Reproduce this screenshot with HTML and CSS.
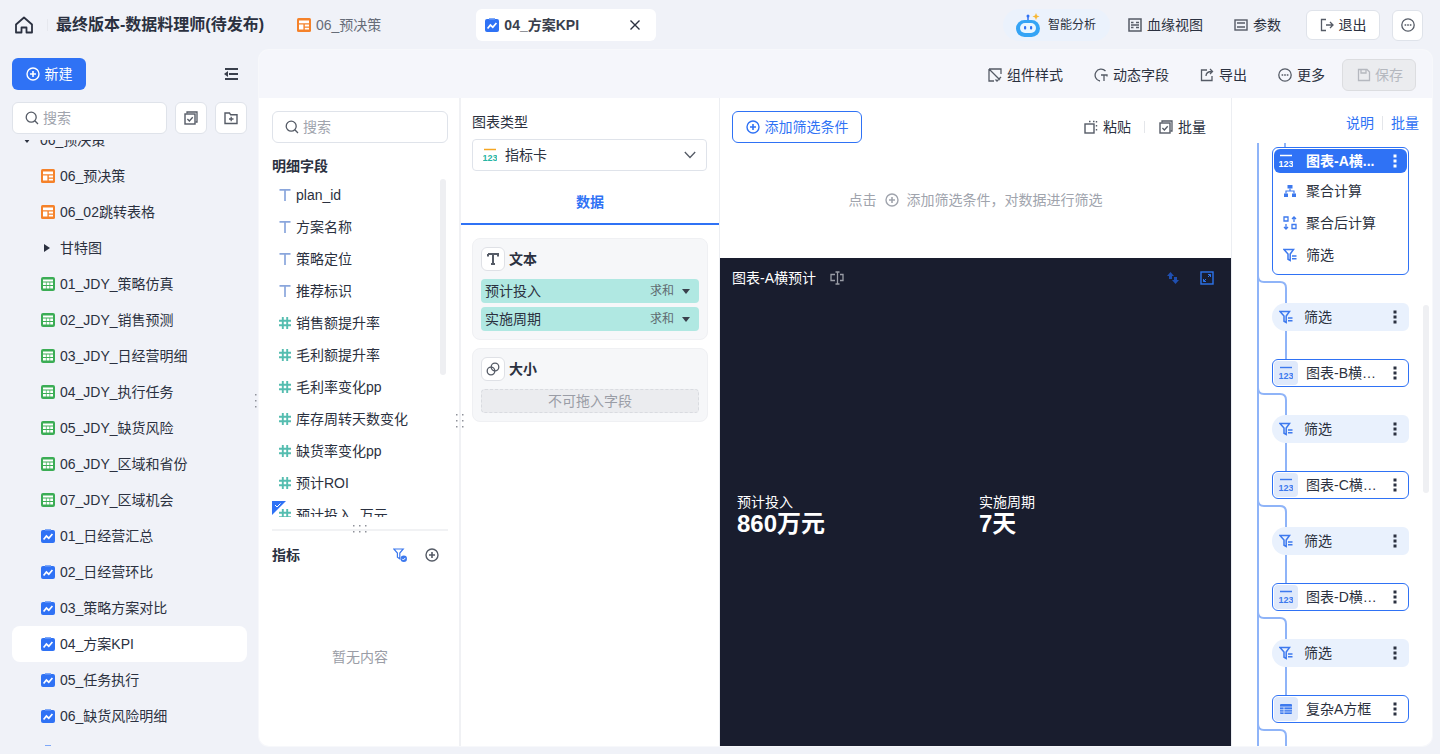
FILE: index.html
```html
<!DOCTYPE html>
<html lang="zh-CN">
<head>
  <meta charset="UTF-8">
  <title>最终版本-数据料理师(待发布)</title>
  <link rel="stylesheet" href="styles.css">
</head>
<body>
<svg class="defs" width="0" height="0">
  <symbol id="i-dash" viewBox="0 0 14 14"><rect width="14" height="14" rx="1.500" fill="#f5822a"/><path d="M2 2.400h10v2.800H2zM2 6.600h4.400v5H2zM7.800 6.600H12v2H7.800zM7.800 9.800H12v1.800H7.800z" fill="#fff"/></symbol>
  <symbol id="i-table" viewBox="0 0 14 14"><rect width="14" height="14" rx="2" fill="#3bad55"/><path d="M2 2.400h10v2H2zM2 5.600h2.900v2.400H2zM5.600 5.600h2.900v2.400H5.600zM9.200 5.600H12v2.400H9.200zM2 9h2.900v2.600H2zM5.600 9h2.900v2.600H5.600zM9.200 9H12v2.600H9.200z" fill="#fff"/></symbol>
  <symbol id="i-chart" viewBox="0 0 14 14"><rect y="1" width="14" height="13" rx="2" fill="#2f72f5"/><path d="M4 0h6v1.500H4z" fill="#7ea8f8"/><path d="M2.600 10.500l2.800-3.500 2.400 2.200 3.600-4.200" fill="none" stroke="#fff" stroke-width="1.700"/></symbol>
  <symbol id="i-t" viewBox="0 0 14 14"><path d="M1.500 1.800h11M7 1.800V13" fill="none" stroke="#8aa6dc" stroke-width="1.700"/></symbol>
  <symbol id="i-hash" viewBox="0 0 14 14"><path d="M4.800 1v12M9.200 1v12M1 4.800h12M1 9.200h12" fill="none" stroke="#55bdb0" stroke-width="1.900"/></symbol>
  <symbol id="i-search" viewBox="0 0 14 14"><circle cx="6.200" cy="6.200" r="5" fill="none" stroke="#555b66" stroke-width="1.300"/><path d="M9.800 9.800l3.200 3.200" stroke="#555b66" stroke-width="1.300"/></symbol>
  <symbol id="i-plus" viewBox="0 0 14 14"><circle cx="7" cy="7" r="6" fill="none" stroke="currentColor" stroke-width="1.400"/><path d="M4 7h6M7 4v6" stroke="currentColor" stroke-width="1.600"/></symbol>
  <symbol id="i-more" viewBox="0 0 14 14"><circle cx="7" cy="7" r="6.200" fill="none" stroke="#555b66" stroke-width="1.300"/><path d="M3.600 6.200h1.600v1.600H3.600zM6.200 6.200h1.600v1.600H6.200zM8.800 6.200h1.600v1.600H8.800z" fill="#555b66"/></symbol>
  <symbol id="i-batch" viewBox="0 0 14 14"><path d="M3 2.500V1h10v10h-1.500" fill="none" stroke="#555b66" stroke-width="1.300"/><rect x="1" y="3" width="10" height="10" fill="none" stroke="#555b66" stroke-width="1.400"/><path d="M3.400 8l2 2 3.300-3.800" fill="none" stroke="#555b66" stroke-width="1.300"/></symbol>
  <symbol id="i-funnel" viewBox="0 0 14 14"><path d="M1 1.500h9.500L7.200 6v6.500L5 11.200V6z" fill="none" stroke="#3d79ee" stroke-width="1.500"/><path d="M9 8h4.500M9 10.800h4.500" stroke="#3d79ee" stroke-width="1.400"/></symbol>
  <symbol id="i-num" viewBox="0 0 14 14"><path d="M1 1.500h12" stroke="currentColor" stroke-width="1.400"/><text x="7" y="12.500" font-size="9" font-weight="700" text-anchor="middle" fill="currentColor" font-family="Liberation Sans">123</text></symbol>
  <symbol id="i-dots" viewBox="0 0 4 14"><path d="M.5 .5h3v3h-3zM.5 5.500h3v3h-3zM.5 10.500h3v3h-3z" fill="currentColor"/></symbol>
  <symbol id="i-link" viewBox="0 0 32 28"><path d="M2 0v1q0 6 6 6h16q6 0 6 6v15" fill="none" stroke="#8fb4f8" stroke-width="2"/></symbol>
  <symbol id="i-grip" viewBox="0 0 8 14"><path d="M0 0h1.500v1.500H0zM0 6h1.500v1.500H0zM0 12h1.500v1.500H0zM6 0h1.500v1.500H6zM6 6h1.500v1.500H6zM6 12h1.500v1.500H6z" fill="#8f929a"/></symbol>
  <symbol id="i-grip-s" viewBox="0 0 2 14"><path d="M0 0h1.500v1.500H0zM0 6h1.500v1.500H0zM0 12h1.500v1.500H0z" fill="#8f929a"/></symbol>
  <symbol id="i-grip-h" viewBox="0 0 14 8"><path d="M0 0h1.500v1.500H0zM6 0h1.500v1.500H6zM12 0h1.500v1.500H12zM0 6h1.500v1.500H0zM6 6h1.500v1.500H6zM12 6h1.500v1.500H12z" fill="#8f929a"/></symbol>
</svg>

<header class="topbar">
  <svg class="home" width="20" height="20" viewBox="0 0 20 20"><path d="M2 9.500L10 2.500l8 7V17.500h-5.500v-5h-5v5H2z" fill="none" stroke="#2b3140" stroke-width="1.800" stroke-linejoin="round"/></svg>
  <span class="top-sep"></span>
  <h1 class="title">最终版本-数据料理师(待发布)</h1>
  <div class="tab"><svg class="ico14"><use href="#i-dash"/></svg>06_预决策</div>
  <div class="tab tab-on"><svg class="ico14"><use href="#i-chart"/></svg><b>04_方案KPI</b><svg class="tab-x" width="10" height="10" viewBox="0 0 10 10"><path d="M.5 .5l9 9M9.500 .5l-9 9" stroke="#2b3140" stroke-width="1.400"/></svg></div>
  <div class="top-right">
    <div class="ai-pill">
      <svg width="26" height="26" viewBox="0 0 26 26"><path d="M21 1l1 2.500 2.500 1-2.500 1-1 2.500-1-2.500-2.500-1 2.500-1z" fill="#f7b733"/><circle cx="13" cy="4" r="1.500" fill="#2f72f5"/><path d="M13 4v4" stroke="#2f72f5" stroke-width="1.500"/><rect x="1" y="8" width="24" height="17" rx="8.500" fill="#35a4f5"/><rect x="5" y="11" width="16" height="10" rx="5" fill="#eaf6ff"/><rect x="9" y="14" width="2.200" height="3.500" rx="1" fill="#2f72f5"/><rect x="15" y="14" width="2.200" height="3.500" rx="1" fill="#2f72f5"/></svg>
      <span>智能分析</span>
    </div>
    <div class="top-link"><svg class="ico14" viewBox="0 0 14 14"><rect x="1" y="1" width="12" height="12" fill="none" stroke="#555b66" stroke-width="1.500"/><path d="M3 4.500h2.500M3 9.500h2.500M8 4.500h3M8 9.500h3M3 7h8" stroke="#555b66" stroke-width="1.300"/></svg>血缘视图</div>
    <div class="top-link link-param"><svg class="ico14" viewBox="0 0 14 14"><rect x="1" y="2" width="12" height="10" fill="none" stroke="#555b66" stroke-width="1.400"/><path d="M3 5h8M3 9h8" stroke="#555b66" stroke-width="1.300"/></svg>参数</div>
    <button class="btn-exit"><svg class="ico14" viewBox="0 0 14 14"><path d="M6 1.500H1.500v11H6M6 7h7M10 4l3 3-3 3" fill="none" stroke="#555b66" stroke-width="1.300"/></svg>退出</button>
    <button class="btn-more"><svg class="ico14"><use href="#i-more"/></svg></button>
  </div>
</header>

<div class="page">
  <aside class="side">
    <div class="side-top">
      <button class="btn-new"><svg class="ico14"><use href="#i-plus"/></svg>新建</button>
      <svg class="collapse" width="14" height="14" viewBox="0 0 14 14"><path d="M1 2h13M5 7h9M1 12h13" stroke="#3a404c" stroke-width="1.800"/><path d="M0 7l4-3v6z" fill="#3a404c"/></svg>
    </div>
    <div class="side-search">
      <div class="search"><svg class="ico14"><use href="#i-search"/></svg>搜索</div>
      <div class="square"><svg class="ico14"><use href="#i-batch"/></svg></div>
      <div class="square"><svg class="ico14" viewBox="0 0 14 14"><path d="M1 2h4.500l1.200 1.800H13v8.700H1z" fill="none" stroke="#555b66" stroke-width="1.400"/><path d="M5 8h4.500M7.200 5.800v4.400" stroke="#555b66" stroke-width="1.300"/></svg></div>
    </div>
    <ul class="tree-list">
      <li class="row row-group"><span class="dot"></span>06_预决策</li>
      <li class="row"><svg class="ico14"><use href="#i-dash"/></svg>06_预决策</li>
      <li class="row"><svg class="ico14"><use href="#i-dash"/></svg>06_02跳转表格</li>
      <li class="row row-folder"><span class="caret"></span>甘特图</li>
      <li class="row"><svg class="ico14"><use href="#i-table"/></svg>01_JDY_策略仿真</li>
      <li class="row"><svg class="ico14"><use href="#i-table"/></svg>02_JDY_销售预测</li>
      <li class="row"><svg class="ico14"><use href="#i-table"/></svg>03_JDY_日经营明细</li>
      <li class="row"><svg class="ico14"><use href="#i-table"/></svg>04_JDY_执行任务</li>
      <li class="row"><svg class="ico14"><use href="#i-table"/></svg>05_JDY_缺货风险</li>
      <li class="row"><svg class="ico14"><use href="#i-table"/></svg>06_JDY_区域和省份</li>
      <li class="row"><svg class="ico14"><use href="#i-table"/></svg>07_JDY_区域机会</li>
      <li class="row"><svg class="ico14"><use href="#i-chart"/></svg>01_日经营汇总</li>
      <li class="row"><svg class="ico14"><use href="#i-chart"/></svg>02_日经营环比</li>
      <li class="row"><svg class="ico14"><use href="#i-chart"/></svg>03_策略方案对比</li>
      <li class="row row-on"><svg class="ico14"><use href="#i-chart"/></svg>04_方案KPI</li>
      <li class="row"><svg class="ico14"><use href="#i-chart"/></svg>05_任务执行</li>
      <li class="row"><svg class="ico14"><use href="#i-chart"/></svg>06_缺货风险明细</li>
      <li class="row"><svg class="ico14"><use href="#i-chart"/></svg></li>
    </ul>
    <svg class="grip grip-side"><use href="#i-grip-s"/></svg>
  </aside>

  <main class="main">
    <div class="toolbar">
      <div class="tool"><svg class="ico14" viewBox="0 0 14 14"><path d="M1 1h12v5M1 1v12h5M1 1l11 11M13 9l-4 4-1.500-1.500" fill="none" stroke="#555b66" stroke-width="1.300"/></svg>组件样式</div>
      <div class="tool"><svg class="ico14" viewBox="0 0 14 14"><path d="M11.500 3A6 6 0 1 0 6 13M7 7h6v1.500M10 7v6" fill="none" stroke="#555b66" stroke-width="1.300"/></svg>动态字段</div>
      <div class="tool"><svg class="ico14" viewBox="0 0 14 14"><path d="M7 2H1.500v10.500H12V8M6 8c0-3 2-4.500 6-4.500M10 1l2.500 2.500L10 6" fill="none" stroke="#555b66" stroke-width="1.300"/></svg>导出</div>
      <div class="tool"><svg class="ico14"><use href="#i-more"/></svg>更多</div>
      <button class="btn-save"><svg class="ico14" viewBox="0 0 14 14"><path d="M1.500 1.500h8.500l2.500 2.500v8.500h-11zM4 1.500v3.500h5V1.500" fill="none" stroke="#b5b8bf" stroke-width="1.300"/></svg>保存</button>
    </div>

    <div class="work">
      <section class="fields">
        <div class="search search-f"><svg class="ico14"><use href="#i-search"/></svg>搜索</div>
        <h3 class="sub">明细字段</h3>
        <div class="field-box">
          <ul class="field-list">
            <li><svg class="ico14"><use href="#i-t"/></svg>plan_id</li>
            <li><svg class="ico14"><use href="#i-t"/></svg>方案名称</li>
            <li><svg class="ico14"><use href="#i-t"/></svg>策略定位</li>
            <li><svg class="ico14"><use href="#i-t"/></svg>推荐标识</li>
            <li><svg class="ico14"><use href="#i-hash"/></svg>销售额提升率</li>
            <li><svg class="ico14"><use href="#i-hash"/></svg>毛利额提升率</li>
            <li><svg class="ico14"><use href="#i-hash"/></svg>毛利率变化pp</li>
            <li><svg class="ico14"><use href="#i-hash"/></svg>库存周转天数变化</li>
            <li><svg class="ico14"><use href="#i-hash"/></svg>缺货率变化pp</li>
            <li><svg class="ico14"><use href="#i-hash"/></svg>预计ROI</li>
            <li class="field-checked"><svg class="ico14"><use href="#i-hash"/></svg>预计投入_万元</li>
          </ul>
          <span class="f-scroll"></span>
          <svg class="corner" width="14" height="14" viewBox="0 0 14 14"><path d="M0 0h14L0 14z" fill="#2f72f5"/><path d="M3 4l2 2 3.500-3.500" fill="none" stroke="#fff" stroke-width="1"/></svg>
        </div>
        <div class="split"><svg class="grip-h"><use href="#i-grip-h"/></svg></div>
        <div class="metric-head">
          <h3 class="sub">指标</h3>
          <svg class="ico14" viewBox="0 0 14 14"><path d="M.8 1h9.400L6.800 5v5.800L4.400 9.200V5z" fill="none" stroke="#3d79ee" stroke-width="1.200"/><circle cx="10.800" cy="10.800" r="3.200" fill="#3d79ee"/><path d="M9.200 10.800l1.200 1.200 1.900-2.100" fill="none" stroke="#fff" stroke-width="1"/></svg>
          <svg class="ico14 metric-add"><use href="#i-plus"/></svg>
        </div>
        <div class="empty">暂无内容</div>
        <svg class="grip grip-f"><use href="#i-grip"/></svg>
      </section>

      <section class="config">
        <div class="cfg-type">
          <label>图表类型</label>
          <div class="select">
            <svg class="ico14" viewBox="0 0 14 14"><path d="M1 1.500h12" stroke="#f5a623" stroke-width="1.400"/><text x="7" y="12.500" font-size="9" font-weight="700" text-anchor="middle" fill="#27b5a4" font-family="Liberation Sans">123</text></svg>
            <span>指标卡</span>
            <svg class="chev" width="12" height="8" viewBox="0 0 12 8"><path d="M.8 1l5.200 5.500L11.200 1" fill="none" stroke="#555b66" stroke-width="1.300"/></svg>
          </div>
        </div>
        <div class="cfg-tab">数据</div>
        <div class="slots">
          <div class="slot">
            <div class="slot-head">
              <span class="slot-ico"><svg class="ico14" viewBox="0 0 14 14"><path d="M2 2h10v2.400M2 2v2.400M7 2v10M5 12h4" fill="none" stroke="#555b66" stroke-width="2"/></svg></span>文本
            </div>
            <div class="chip"><span>预计投入</span><em>求和</em><i></i></div>
            <div class="chip"><span>实施周期</span><em>求和</em><i></i></div>
          </div>
          <div class="slot">
            <div class="slot-head">
              <span class="slot-ico"><svg class="ico14" viewBox="0 0 14 14"><circle cx="5" cy="9" r="3.800" fill="none" stroke="#555b66" stroke-width="1.300"/><circle cx="9" cy="5" r="3.800" fill="none" stroke="#555b66" stroke-width="1.300"/></svg></span>大小
            </div>
            <div class="nodrop">不可拖入字段</div>
          </div>
        </div>
      </section>

      <section class="canvas">
        <div class="filter-area">
          <div class="filter-head">
            <button class="btn-filter"><svg class="ico14"><use href="#i-plus"/></svg>添加筛选条件</button>
            <div class="filter-acts">
              <span><svg class="ico14" viewBox="0 0 14 14"><rect x="1" y="4" width="9" height="9" fill="none" stroke="#555b66" stroke-width="1.400"/><path d="M5 1.500h1.500M9 1.500h1.500M12.500 1v1.500M12.500 5v1.500M12.500 9v1.500" stroke="#555b66" stroke-width="1.400"/></svg>粘贴</span>
              <i class="v-sep"></i>
              <span><svg class="ico14"><use href="#i-batch"/></svg>批量</span>
            </div>
          </div>
          <div class="filter-tip">点击<svg class="ico14"><use href="#i-plus"/></svg>添加筛选条件，对数据进行筛选</div>
        </div>
        <div class="chart">
          <div class="chart-head">
            <span>图表-A横预计</span>
            <svg class="ico14 chart-edit" viewBox="0 0 14 14"><path d="M5 3.500H1v6h4M10 3.500h3v6h-3M7.500 1v12M5.500 1h4M5.500 13h4" fill="none" stroke="#9a9da6" stroke-width="1.300"/></svg>
            <div class="chart-acts">
              <svg class="ico14" viewBox="0 0 14 14"><path d="M4.500 1L8 5H6v3H3V5H1zM9.500 13L6 9h2V6h3v3h2z" fill="#1f4fb0"/></svg>
              <svg class="ico14" viewBox="0 0 14 14"><rect x="1" y="1" width="12" height="12" fill="none" stroke="#2d74ec" stroke-width="1.400"/><path d="M8 6l2.500-2.500M8 3.500h2.500V6M6 8L3.500 10.500M3.500 8v2.500H6" fill="none" stroke="#2d74ec" stroke-width="1"/></svg>
            </div>
          </div>
          <div class="kpis">
            <div class="kpi"><span>预计投入</span><strong>860万元</strong></div>
            <div class="kpi"><span>实施周期</span><strong>7天</strong></div>
          </div>
        </div>
      </section>

      <section class="steps">
        <div class="steps-head"><a>说明</a><i></i><a>批量</a></div>
        <div class="flow">
          <div class="group">
            <div class="group-title"><svg class="ico14"><use href="#i-num"/></svg><b>图表-A横...</b><svg class="dots"><use href="#i-dots"/></svg></div>
            <div class="group-row"><svg class="ico14" viewBox="0 0 14 14"><path d="M4.500 1h5v3.500h-5zM1 9.500h4V13H1zM9 9.500h4V13H9z" fill="#3d79ee"/><path d="M7 4.500V7M3 9.500V7h8v2.500" fill="none" stroke="#3d79ee" stroke-width="1.200"/></svg>聚合计算</div>
            <div class="group-row"><svg class="ico14" viewBox="0 0 14 14"><path d="M1 1h4v4H1zM9 8.500h4v4H9z" fill="none" stroke="#3d79ee" stroke-width="1.300"/><path d="M3 8v5M1 11l2 2 2-2M11 6V1M9 3l2-2 2 2" fill="none" stroke="#3d79ee" stroke-width="1.300"/></svg>聚合后计算</div>
            <div class="group-row"><svg class="ico14"><use href="#i-funnel"/></svg>筛选</div>
          </div>
          <svg class="link"><use href="#i-link"/></svg>
          <div class="pill"><svg class="ico14"><use href="#i-funnel"/></svg><span>筛选</span><svg class="dots"><use href="#i-dots"/></svg></div>
          <div class="stem"></div>
          <div class="node"><span class="node-ico"><svg class="ico14"><use href="#i-num"/></svg></span><span class="node-name">图表-B横预计</span><svg class="dots"><use href="#i-dots"/></svg></div>
          <svg class="link"><use href="#i-link"/></svg>
          <div class="pill"><svg class="ico14"><use href="#i-funnel"/></svg><span>筛选</span><svg class="dots"><use href="#i-dots"/></svg></div>
          <div class="stem"></div>
          <div class="node"><span class="node-ico"><svg class="ico14"><use href="#i-num"/></svg></span><span class="node-name">图表-C横预计</span><svg class="dots"><use href="#i-dots"/></svg></div>
          <svg class="link"><use href="#i-link"/></svg>
          <div class="pill"><svg class="ico14"><use href="#i-funnel"/></svg><span>筛选</span><svg class="dots"><use href="#i-dots"/></svg></div>
          <div class="stem"></div>
          <div class="node"><span class="node-ico"><svg class="ico14"><use href="#i-num"/></svg></span><span class="node-name">图表-D横预计</span><svg class="dots"><use href="#i-dots"/></svg></div>
          <svg class="link"><use href="#i-link"/></svg>
          <div class="pill"><svg class="ico14"><use href="#i-funnel"/></svg><span>筛选</span><svg class="dots"><use href="#i-dots"/></svg></div>
          <div class="stem"></div>
          <div class="node"><span class="node-ico"><svg class="ico14" viewBox="0 0 14 14"><rect x="1" y="2" width="12" height="10" rx="1" fill="#3d79ee"/><path d="M1 5h12M1 7.700h12M1 10h12M5 5v7" stroke="#dfe9fb" stroke-width=".8"/></svg></span><span class="node-name">复杂A方框</span><svg class="dots"><use href="#i-dots"/></svg></div>
          <svg class="link"><use href="#i-link"/></svg>
        </div>
        <span class="s-scroll"></span>
      </section>
    </div>
  </main>
</div>
</body>
</html>
```

FILE: styles.css
```css
* {
    box-sizing: border-box;
}
html, body {
    height: 100%;
}
body {
    margin: 0;
    overflow: hidden;
    background-color: #f0f2f8;
    color: #2b3140;
    font-family: "Liberation Sans", "Noto Sans CJK SC", sans-serif;
    font-size: 14px;
    line-height: 20px;
}
ul {
    list-style: none;
    margin: 0;
    padding: 0;
}
button {
    font: inherit;
    cursor: pointer;
}
.defs {
    position: absolute;
}
.ico14 {
    width: 14px;
    height: 14px;
    flex: none;
}

/* top bar */
.topbar {
    height: 50px;
    display: flex;
    align-items: center;
    padding-left: 14px;
}
.home {
    flex: none;
}
.top-sep {
    width: 1px;
    height: 12px;
    margin: 0 8px 0 13px;
    background-color: #e6e8ee;
}
.title {
    margin: 0;
    width: 241px;
    font-size: 16px;
    line-height: 22px;
    font-weight: 700;
    white-space: nowrap;
}
.tab {
    display: flex;
    align-items: center;
    gap: 5px;
    color: #666c78;
}
.tab-on {
    margin-left: 95px;
    width: 180px;
    height: 32px;
    padding: 0 16px 0 9px;
    background-color: #fff;
    border-radius: 6px;
    color: #3a404c;
}
.tab-x {
    margin-left: auto;
}
.top-right {
    margin-left: auto;
    display: flex;
    align-items: center;
    padding-right: 17px;
}
.ai-pill {
    width: 107px;
    height: 32px;
    display: flex;
    align-items: center;
    gap: 7px;
    padding-left: 12px;
    border-radius: 16px;
    background-color: #ebf2fc;
    font-size: 12px;
}
.top-link {
    display: flex;
    align-items: center;
    gap: 5px;
    margin-left: 18px;
}
.link-param {
    margin-left: 31px;
}
.btn-exit {
    display: flex;
    align-items: center;
    justify-content: center;
    gap: 5px;
    width: 74px;
    height: 30px;
    margin-left: 25px;
    background-color: #fff;
    border: 1px solid #dfe3ea;
    border-radius: 6px;
    color: #2b3140;
}
.btn-more {
    display: flex;
    align-items: center;
    justify-content: center;
    width: 31px;
    height: 31px;
    margin-left: 12px;
    padding: 0;
    background-color: #fff;
    border: 1px solid #dfe3ea;
    border-radius: 6px;
}

/* page */
.page {
    height: 696px;
    display: flex;
}
.side {
    position: relative;
    width: 259px;
    flex: none;
    padding-top: 8px;
}
.side-top {
    display: flex;
    align-items: center;
    justify-content: space-between;
    padding: 0 21px 0 12px;
}
.btn-new {
    display: flex;
    align-items: center;
    justify-content: center;
    gap: 5px;
    width: 74px;
    height: 32px;
    padding: 0;
    background-color: #2f72f5;
    border: 0;
    border-radius: 6px;
    color: #fff;
}
.side-search {
    display: flex;
    gap: 8px;
    margin: 12px 12px 0 12px;
}
.search {
    display: flex;
    align-items: center;
    gap: 4px;
    width: 155px;
    height: 32px;
    padding-left: 12px;
    background-color: #fff;
    border: 1px solid #dfe3ea;
    border-radius: 6px;
    color: #a0a4ad;
}
.square {
    display: flex;
    align-items: center;
    justify-content: center;
    width: 32px;
    height: 32px;
    background-color: #fff;
    border: 1px solid #dfe3ea;
    border-radius: 6px;
}
.tree-list {
    height: 606px;
    margin-top: 6px;
    padding: 0 12px;
    overflow: hidden;
}
.row {
    display: flex;
    align-items: center;
    gap: 5px;
    height: 36px;
    padding-left: 29px;
    border-radius: 8px;
}
.row-group {
    margin-top: -18px;
    padding-left: 11px;
    gap: 9px;
}
.row-group .dot {
    width: 0;
    height: 0;
    border-top: 5px solid #2b3140;
    border-left: 4px solid transparent;
    border-right: 4px solid transparent;
}
.row-folder {
    padding-left: 32px;
    gap: 10px;
}
.caret {
    width: 0;
    height: 0;
    border-left: 6px solid #2b3140;
    border-top: 4px solid transparent;
    border-bottom: 4px solid transparent;
}
.row-on {
    background-color: #fff;
}
.grip {
    position: absolute;
    width: 8px;
    height: 14px;
}
.grip-side {
    left: 255px;
    top: 344px;
    width: 2px;
}

/* main card */
.main {
    flex: 1;
    margin-right: 8px;
    display: flex;
    flex-direction: column;
    background-color: #f5f6fb;
    border-radius: 10px;
    overflow: hidden;
    box-shadow: 0 0 0 1px #f7f8fb;
}
.toolbar {
    height: 48px;
    flex: none;
    display: flex;
    align-items: center;
    justify-content: flex-end;
    gap: 31px;
    padding: 2px 16px 0 0;
}
.tool {
    display: flex;
    align-items: center;
    gap: 5px;
}
.btn-save {
    display: flex;
    align-items: center;
    justify-content: center;
    gap: 4px;
    width: 74px;
    height: 32px;
    margin-left: -14px;
    padding: 0 0 0 2px;
    background-color: #ebecef;
    border: 1px solid #dcdde0;
    border-radius: 6px;
    color: #b5b8bf;
}
.work {
    flex: 1;
    min-height: 0;
    display: flex;
    background-color: #fff;
}

/* field panel */
.fields {
    position: relative;
    width: 202px;
    flex: none;
    padding: 13px 11px 0 13px;
    border-right: 2px solid #f0f1f4;
}
.search-f {
    width: 176px;
}
.sub {
    margin: 0;
    font-size: 14px;
    line-height: 18px;
    font-weight: 700;
}
.fields > .sub {
    margin-top: 14px;
}
.field-box {
    position: relative;
    height: 338px;
    margin-top: 4px;
    overflow: hidden;
}
.field-list li {
    display: flex;
    align-items: center;
    gap: 4px;
    height: 32px;
    padding-left: 6px;
}
.f-scroll {
    position: absolute;
    right: 2px;
    top: 0;
    width: 6px;
    height: 196px;
    border-radius: 3px;
    background-color: #eeeff2;
}
.corner {
    position: absolute;
    left: 0;
    top: 322px;
}
.split {
    position: relative;
    height: 2px;
    margin-top: 12px;
    background-color: #f1f2f4;
}
.grip-h {
    position: absolute;
    left: 81px;
    top: -4px;
    width: 14px;
    height: 8px;
}
.metric-head {
    display: flex;
    align-items: center;
    gap: 18px;
    height: 18px;
    margin-top: 15px;
}
.metric-head .sub {
    flex: 1;
}
.metric-add {
    color: #555b66;
    margin-right: 9px;
}
.empty {
    margin-top: 83px;
    text-align: center;
    color: #9a9da6;
}
.grip-f {
    left: 197px;
    top: 316px;
}

/* config panel */
.config {
    width: 259px;
    flex: none;
    border-right: 1px solid #eceef2;
}
.cfg-type {
    padding: 15px 12px 0 11px;
}
.cfg-type label {
    display: block;
    line-height: 18px;
}
.select {
    display: flex;
    align-items: center;
    gap: 8px;
    height: 32px;
    margin-top: 8px;
    padding: 0 10px;
    border: 1px solid #dfe3ea;
    border-radius: 4px;
}
.chev {
    margin-left: auto;
}
.cfg-tab {
    height: 44px;
    margin-top: 10px;
    padding-top: 10px;
    border-bottom: 2px solid #2f72f5;
    text-align: center;
    color: #2f72f5;
    font-weight: 700;
    line-height: 22px;
}
.slots {
    padding: 13px 11px 0;
}
.slot {
    margin-bottom: 8px;
    padding: 8px;
    background-color: #f6f7f9;
    border: 1px solid #eff0f3;
    border-radius: 8px;
}
.slot-head {
    display: flex;
    align-items: center;
    gap: 4px;
    height: 24px;
    margin-bottom: 8px;
    font-weight: 700;
}
.slot-ico {
    display: flex;
    align-items: center;
    justify-content: center;
    width: 24px;
    height: 24px;
    background-color: #fff;
    border: 1px solid #dfe1e6;
    border-radius: 6px;
}
.chip {
    display: flex;
    align-items: center;
    height: 24px;
    margin-bottom: 4px;
    padding: 0 9px 0 4px;
    background-color: #b0e8e2;
    border-radius: 4px;
}
.chip:last-child {
    margin-bottom: 0;
}
.chip span {
    flex: 1;
}
.chip em {
    font-style: normal;
    font-size: 12px;
    color: #5f6a70;
    margin-right: 8px;
}
.chip i {
    width: 0;
    height: 0;
    border-top: 5px solid #3a404c;
    border-left: 4px solid transparent;
    border-right: 4px solid transparent;
}
.nodrop {
    height: 24px;
    background-color: #ebecef;
    border: 1px dashed #d9dbe0;
    border-radius: 4px;
    text-align: center;
    line-height: 22px;
    color: #9a9da6;
}

/* canvas */
.canvas {
    flex: 1;
    min-width: 0;
    display: flex;
    flex-direction: column;
    border-right: 1px solid #eceef2;
}
.filter-area {
    height: 160px;
    flex: none;
    padding: 13px 12px 0;
}
.filter-head {
    display: flex;
    align-items: center;
    justify-content: space-between;
}
.btn-filter {
    display: flex;
    align-items: center;
    justify-content: center;
    gap: 5px;
    width: 130px;
    height: 32px;
    padding: 0;
    background-color: #fff;
    border: 1px solid #2f72f5;
    border-radius: 6px;
    color: #2f72f5;
}
.filter-acts {
    display: flex;
    align-items: center;
    padding-right: 13px;
}
.filter-acts span {
    display: flex;
    align-items: center;
    gap: 5px;
}
.v-sep {
    width: 1px;
    height: 12px;
    margin: 0 14px 0 13px;
    background-color: #e4e6ea;
}
.filter-tip {
    display: flex;
    align-items: center;
    justify-content: center;
    gap: 8px;
    margin-top: 47px;
    color: #a0a4ad;
}
.chart {
    flex: 1;
    display: flex;
    flex-direction: column;
    background-color: #191d2e;
    color: #fff;
}
.chart-head {
    display: flex;
    align-items: center;
    height: 40px;
    flex: none;
    padding: 0 17px 0 12px;
}
.chart-edit {
    margin-left: 14px;
}
.chart-acts {
    margin-left: auto;
    display: flex;
    gap: 20px;
}
.kpis {
    flex: 1;
    display: grid;
    grid-template-columns: 242px 1fr;
    align-items: center;
    padding: 0 17px 13px;
}
.kpi span {
    display: block;
    line-height: 16px;
}
.kpi strong {
    display: block;
    font-size: 24px;
    line-height: 28px;
}

/* step flow */
.steps {
    position: relative;
    width: 200px;
    flex: none;
    display: flex;
    flex-direction: column;
}
.steps-head {
    height: 49px;
    flex: none;
    display: flex;
    align-items: center;
    justify-content: flex-end;
    gap: 8px;
    padding-right: 13px;
    color: #2f72f5;
}
.steps-head i {
    width: 1px;
    height: 14px;
    background-color: #e4e6ea;
}
.flow {
    position: relative;
    flex: 1;
    min-height: 0;
    margin-top: -4px;
    padding: 4px 23px 0 40px;
    overflow: hidden;
}
.flow::before {
    content: "";
    position: absolute;
    left: 25px;
    top: 0;
    bottom: 0;
    width: 2px;
    background-color: #8fb4f8;
}
.group {
    position: relative;
    height: 128px;
    padding: 1px;
    border: 1px solid #2f72f5;
    border-radius: 6px;
    background-color: #fff;
}
.group::before {
    content: "";
    position: absolute;
    left: 11px;
    top: -5px;
    width: 2px;
    height: 4px;
    background-color: #8fb4f8;
}
.group-title {
    display: flex;
    align-items: center;
    height: 24px;
    padding: 0 10px 0 5px;
    border-radius: 6px;
    background-color: #2f72f5;
    color: #fff;
}
.group-title b {
    flex: 1;
    margin-left: 13px;
}
.group-row {
    display: flex;
    align-items: center;
    gap: 9px;
    height: 32px;
    padding-left: 9px;
}
.group-title + .group-row {
    margin-top: 2px;
}
.dots {
    width: 4px;
    height: 14px;
    flex: none;
}
.link {
    display: block;
    position: relative;
    width: 32px;
    height: 28px;
    margin-left: -16px;
}
.pill {
    position: relative;
    display: flex;
    align-items: center;
    height: 28px;
    padding: 0 12px 0 7px;
    background-color: #e9f1fd;
    border-radius: 14px 6px 6px 14px;
}
.pill span {
    flex: 1;
    margin-left: 11px;
}
.stem {
    width: 2px;
    height: 28px;
    margin-left: 13px;
    background-color: #8fb4f8;
}
.node {
    position: relative;
    display: flex;
    align-items: center;
    height: 28px;
    padding: 0 11px 0 1px;
    background-color: #fff;
    border: 1px solid #2f72f5;
    border-radius: 6px;
}
.node-ico {
    display: flex;
    align-items: center;
    justify-content: center;
    width: 24px;
    height: 24px;
    border-radius: 4px;
    background-color: #dfe9fb;
    color: #3d79ee;
    flex: none;
}
.node-name {
    flex: 1;
    min-width: 0;
    margin: 0 14px 0 8px;
    white-space: nowrap;
    overflow: hidden;
    text-overflow: ellipsis;
}
.s-scroll {
    position: absolute;
    right: 3px;
    top: 207px;
    width: 6px;
    height: 188px;
    border-radius: 3px;
    background-color: #eff0f3;
}
```
